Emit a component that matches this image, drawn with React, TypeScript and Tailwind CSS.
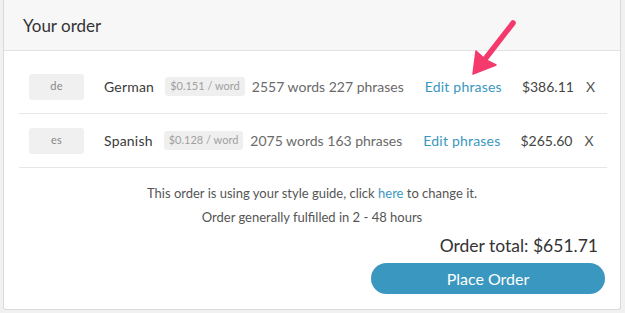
const rows = [
  { code: "de", name: "German", rate: "$0.151 / word", counts: "2557 words 227 phrases", price: "$386.11" },
  { code: "es", name: "Spanish", rate: "$0.128 / word", counts: "2075 words 163 phrases", price: "$265.60" },
];

function Arrow() {
  return (
    <svg className="pointer-events-none absolute left-0 top-0" width="625" height="313" viewBox="0 0 625 313">
      <line x1="513" y1="23" x2="482" y2="63" stroke="#f43a6c" strokeWidth="5.5" strokeLinecap="round" />
      <polygon points="473,74 476,51 486,60 496,65" fill="#f43a6c" strokeLinejoin="round" stroke="#f43a6c" strokeWidth="1.5" />
    </svg>
  );
}

export default function App() {
  return (
    <div className="relative h-[313px] w-[625px] bg-[#f1f1f1] pl-[3px] pr-[4px]" style={{ fontFamily: "Lato, 'Open Sans', sans-serif" }}>
      <div className="flex h-[310px] flex-col rounded-b-[3px] border border-t-0 border-[#dadada] bg-white">
        <div className="flex h-[51px] items-center border-b border-[#e2e2e2] bg-[#f7f7f7] pl-[19px] pt-[2px]">
          <h2 className="text-[17px] text-[#333]">Your order</h2>
        </div>

        <div className="pl-[15px] pr-[13px] pt-[9px]">
          {rows.map((r) => (
            <div key={r.code} className="flex h-[54px] items-center border-b border-[#e6e6e6] text-[14px]">
              <div className="ml-[10px] flex h-[26px] w-[55px] items-center justify-center rounded-[3px] bg-[#f0f0f0] text-[11px] tracking-wide text-[#888]">
                {r.code}
              </div>
              <div className="ml-[20px] tracking-[0.2px] text-[#3a3a3a]">{r.name}</div>
              <div className="ml-[11px] rounded-[3px] bg-[#efefef] px-[5px] py-[1px] text-[11px] text-[#a0a0a0]">{r.rate}</div>
              <div className="ml-[7px] text-[#6a6a6a]">{r.counts}</div>
              <div className="ml-[21px] tracking-[0.2px] text-[#3a97c0]">Edit phrases</div>
              <div className="ml-[20px] text-[#444]">{r.price}</div>
              <div className="ml-[12px] text-[#555]">X</div>
            </div>
          ))}
        </div>

        <div className="mt-[13px] text-center text-[13px] leading-[24px] text-[#555]">
          <p>
            This order is using your style guide, click <span className="text-[#3a97c0]">here</span> to change it.
          </p>
          <p>Order generally fulfilled in 2 - 48 hours</p>
        </div>

        <div className="mt-[4px] flex flex-col items-end pr-[15px]">
          <div className="mr-[7px] text-[17.5px] text-[#333]">Order total: $651.71</div>
          <button className="mt-[4px] h-[31px] w-[234px] rounded-full bg-[#3a97bf] text-[16px] text-white">Place Order</button>
        </div>
      </div>
      <Arrow />
    </div>
  );
}
